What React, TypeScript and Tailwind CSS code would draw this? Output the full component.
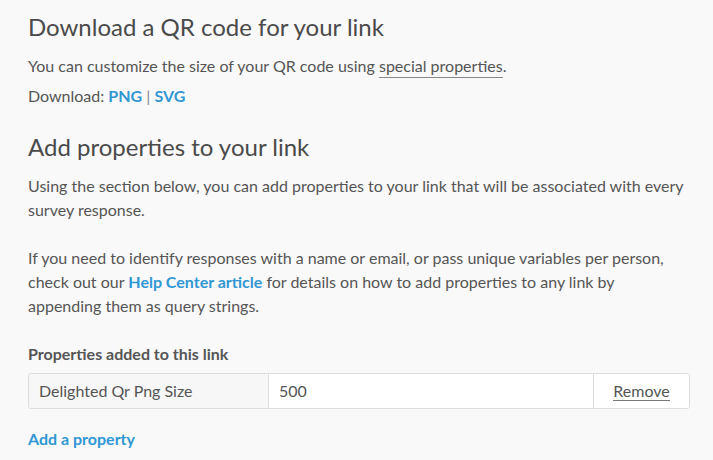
import React from "react";

export default function App() {
  return (
    <div
      className="w-[713px] h-[460px] overflow-hidden bg-[#f9f9f9] text-[#555555] pl-[28px] pr-[23px]"
      style={{ fontFamily: "Lato, 'Open Sans', sans-serif" }}
    >
      <h2 className="text-[24px] leading-[30px] pt-[12px] text-[#4a4a4a]">Download a QR code for your link</h2>
      <p className="text-[16px] leading-[24px] mt-[12px]">
        You can customize the size of your QR code using{" "}
        <span className="border-b border-[#888888] pb-[2px]">special properties</span>.
      </p>
      <p className="text-[16px] leading-[24px] mt-[6px]">
        Download: <span className="font-bold text-[#2f97d3]">PNG</span>{" "}
        <span className="text-[#888888]">|</span>{" "}
        <span className="font-bold text-[#2f97d3]">SVG</span>
      </p>
      <h2 className="text-[24px] leading-[30px] mt-[24px] text-[#4a4a4a]">Add properties to your link</h2>
      <p className="text-[16px] leading-[24px] mt-[12px]">
        Using the section below, you can add properties to your link that will be associated with every survey response.
      </p>
      <p className="text-[16px] leading-[24px] mt-[24px]">
        If you need to identify responses with a name or email, or pass unique variables per person, check out our{" "}
        <span className="font-bold text-[#2f97d3]">Help Center article</span> for details on how to add properties to any link by
        appending them as query strings.
      </p>
      <div className="text-[16px] leading-[24px] mt-[24px] font-bold text-[#555555]">Properties added to this link</div>
      <div className="mt-[7px] flex h-[36px] border border-[#dddddd] rounded-[3px] text-[16px] overflow-hidden">
        <div className="w-[240px] bg-[#f7f7f7] flex items-center pl-[10px] border-r border-[#dddddd]">Delighted Qr Png Size</div>
        <div className="flex-1 bg-white flex items-center pl-[10px] border-r border-[#dddddd]">500</div>
        <div className="w-[95px] bg-white flex items-center justify-center">
          <span className="border-b border-[#777777] leading-[19px]">Remove</span>
        </div>
      </div>
      <div className="text-[16px] leading-[24px] mt-[18px] font-bold text-[#2f97d3]">Add a property</div>
    </div>
  );
}
